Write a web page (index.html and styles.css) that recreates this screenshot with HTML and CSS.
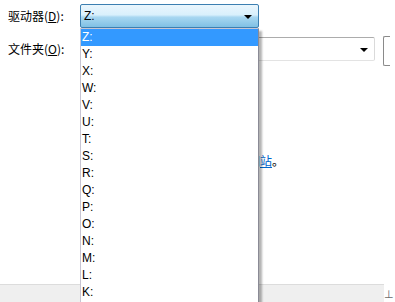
FILE: index.html
```html
<!DOCTYPE html>
<html lang="zh-CN">
<head>
    <meta charset="UTF-8">
    <title>浏览文件夹</title>
    <link rel="stylesheet" href="styles.css">
</head>
<body>
    <div class="dialog">
        <div class="row">
            <label class="label">驱动器(<u>D</u>):</label>
            <div class="combo combo-open">
                <span>Z:</span>
                <span class="arrow"></span>
            </div>
        </div>
        <div class="row row-folder">
            <label class="label">文件夹(<u>O</u>):</label>
            <div class="combo combo-folder">
                <span></span>
                <span class="arrow"></span>
            </div>
            <div class="side-btn"></div>
        </div>
        <p class="hint">要查找更多驱动器，请访问微软网<a href="#">站</a>。</p>
        <div class="footer">
            <span class="grip">⊥</span>
        </div>

        <ul class="drop-list">
            <li class="selected">Z:</li>
            <li>Y:</li>
            <li>X:</li>
            <li>W:</li>
            <li>V:</li>
            <li>U:</li>
            <li>T:</li>
            <li>S:</li>
            <li>R:</li>
            <li>Q:</li>
            <li>P:</li>
            <li>O:</li>
            <li>N:</li>
            <li>M:</li>
            <li>L:</li>
            <li>K:</li>
        </ul>
    </div>
</body>
</html>
```

FILE: styles.css
```css
body {
    margin: 0;
    background: #fff;
    font-family: "Noto Sans CJK SC", "Noto Sans", sans-serif;
    font-size: 12px;
    color: #000;
}
.dialog {
    position: relative;
    width: 395px;
    height: 302px;
    overflow: hidden;
    display: flex;
    flex-direction: column;
}
.row {
    display: flex;
    align-items: center;
    height: 24px;
}
.row:first-child {
    margin-top: 4px;
}
.row-folder {
    margin-top: 9px;
}
.label {
    width: 72px;
    padding-left: 8px;
    line-height: 16px;
}
.label u {
    text-decoration: underline;
}
.combo {
    box-sizing: border-box;
    height: 24px;
    display: flex;
    align-items: center;
    justify-content: space-between;
    padding: 0 6px 0 3px;
    font-family: "Liberation Sans", sans-serif;
}
.combo-open {
    width: 179px;
    border: 1px solid #3c7fb1;
    border-radius: 2px;
    background: linear-gradient(#eaf6fd 0%, #d9f0fc 45%, #a8d7f1 55%, #7fc0e4 100%);
}
.combo-folder {
    width: 295px;
    border: 1px solid #acacac;
    border-bottom-color: #e3e3e3;
    border-left-color: #dadada;
    border-right-color: #dadada;
    border-radius: 2px;
    background: #fff;
    height: 24px;
    margin-right: 8px;
}
.arrow {
    width: 0;
    height: 0;
    border-left: 4px solid transparent;
    border-right: 4px solid transparent;
    border-top: 4px solid #000;
    margin-top: 1px;
}
.side-btn {
    width: 6px;
    height: 28px;
    margin-top: 4px;
    border: 1px solid #8a8a8a;
    border-right: none;
    border-radius: 2px 0 0 2px;
}
.hint {
    margin: 0;
    margin-top: 92px;
    padding-left: 80px;
    line-height: 16px;
    font-size: 12px;
    white-space: nowrap;
}
.hint a {
    color: #0066cc;
}
.footer {
    margin-top: auto;
    height: 17px;
    width: 384px;
    background: #efefef;
    border-top: 1px solid #dcdcdc;
    position: relative;
}
.grip {
    position: absolute;
    left: 384px;
    top: 4px;
    font-size: 11px;
    line-height: 12px;
    color: #6a6a6a;
    font-family: "DejaVu Sans", sans-serif;
}
.drop-list {
    position: absolute;
    left: 80px;
    top: 28px;
    width: 179px;
    box-sizing: border-box;
    margin: 0;
    padding: 0;
    list-style: none;
    background: #fff;
    border: 1px solid #c7c5d3;
    border-right-color: #8a8a95;
    border-bottom: none;
    box-shadow: 3px 3px 2px rgba(0, 0, 0, 0.3);
    font-family: "Liberation Sans", sans-serif;
    font-size: 12px;
    height: 280px;
}
.drop-list li {
    height: 17px;
    line-height: 17px;
    padding-left: 1px;
}
.drop-list li.selected {
    background: #3399ff;
    color: #fff;
}
```
